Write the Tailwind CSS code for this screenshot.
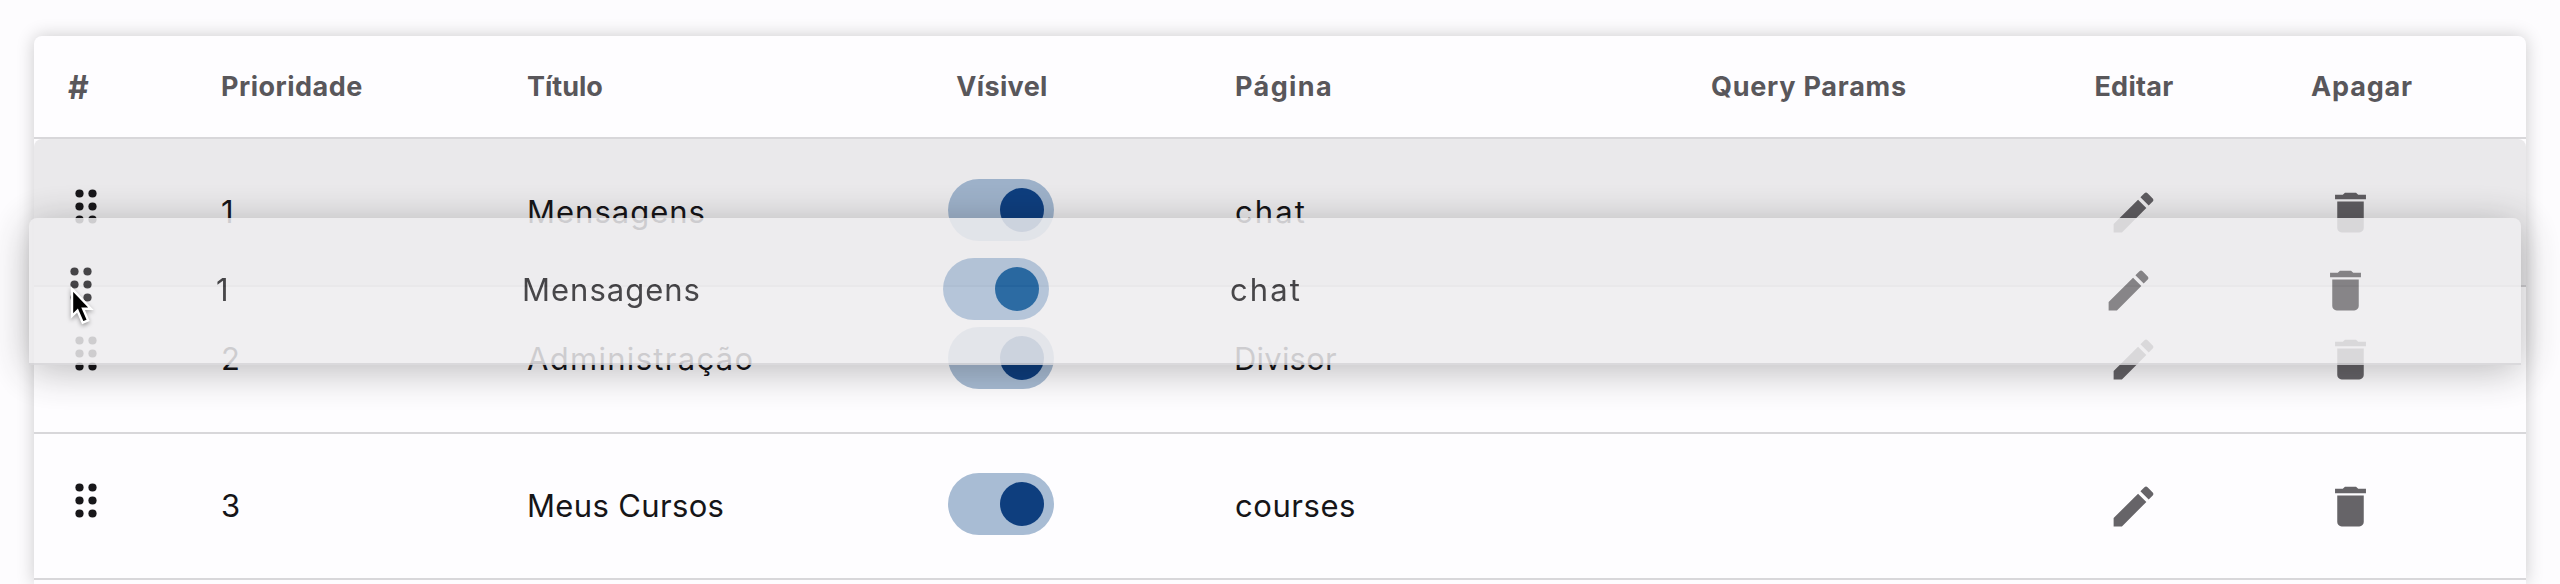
<!DOCTYPE html>
<html lang="pt">
<head>
<meta charset="utf-8">
<title>Menu</title>
<script src="https://cdn.jsdelivr.net/npm/@tailwindcss/browser@4"></script>
</head>
<body class="relative h-[584px] overflow-hidden bg-[#fdfcfe] font-['Inter',sans-serif]">
<svg class="hidden">
  <symbol id="drag" viewBox="0 0 22 35"><circle cx="4.5" cy="4.5" r="4.1"/><circle cx="17.5" cy="4.5" r="4.1"/><circle cx="4.5" cy="17.5" r="4.1"/><circle cx="17.5" cy="17.5" r="4.1"/><circle cx="4.5" cy="30.5" r="4.1"/><circle cx="17.5" cy="30.5" r="4.1"/></symbol>
  <symbol id="edit" viewBox="0 0 24 24"><path d="M3 17.25V21h3.75L17.81 9.94l-3.75-3.75L3 17.25zM20.71 7.04c.39-.39.39-1.02 0-1.41l-2.34-2.34c-.39-.39-1.02-.39-1.41 0l-1.83 1.83 3.75 3.75 1.83-1.83z"/></symbol>
  <symbol id="trash" viewBox="0 0 24 24"><path d="M6 19c0 1.1.9 2 2 2h8c1.1 0 2-.9 2-2V7H6v12zM19 4h-3.5l-1-1h-5l-1 1H5v2h14V4z"/></symbol>
</svg>

<main class="px-[34px] pt-9">
  <section class="h-[548px] rounded-t-lg bg-[#fefdff] shadow-[0_0_18px_rgba(0,0,0,0.2)]">
    <header class="grid h-[103px] grid-cols-[187px_306px_353px_244px_584px_326px_200px_292px] items-center whitespace-nowrap border-b-2 border-[#d8d7da] pt-0.5 text-[27px] font-bold text-[#59575b]">
      <div class="pl-[34px] text-[32px]">#</div>
      <div class="tracking-[0.5px]">Prioridade</div>
      <div>Título</div>
      <div class="text-center tracking-[0.35px]">Vísivel</div>
      <div class="pl-[111px] tracking-[1.4px]">Página</div>
      <div class="pl-[3px] tracking-[0.75px]">Query Params</div>
      <div class="text-center tracking-[0.3px]">Editar</div>
      <div class="pl-[77px] tracking-[0.85px]">Apagar</div>
    </header>

    <div class="grid h-[148px] grid-cols-[187px_306px_352px_244px_585px_326px_198px_292px] items-center whitespace-nowrap rounded-t-lg border-b-2 border-[#d0cfd2] bg-[#eae9eb] text-[31px] text-[#161518]">
      <div class="pb-3 pl-[41px]"><svg class="h-[35px] w-[22px] fill-[#18171a]"><use href="#drag"/></svg></div>
      <div>1</div>
      <div class="tracking-[1px]">Mensagens</div>
      <div class="flex justify-center pb-1"><div class="flex h-[62px] w-[106px] items-center justify-end rounded-full bg-[#9db1c9] pr-[10px]"><div class="size-11 rounded-full bg-[#0e3e7e]"></div></div></div>
      <div class="pl-[112px] tracking-[2.1px]">chat</div>
      <div></div>
      <div class="flex justify-center"><svg class="size-[53px] fill-[#5e5c60]"><use href="#edit"/></svg></div>
      <div class="pl-[92px]"><svg class="size-[53px] fill-[#5e5c60]"><use href="#trash"/></svg></div>
    </div>

    <div class="grid h-[147px] grid-cols-[187px_306px_352px_244px_585px_326px_198px_292px] items-center whitespace-nowrap border-b-2 border-[#d8d7da] text-[31px] text-[#161518]">
      <div class="pb-3 pl-[41px]"><svg class="h-[35px] w-[22px] fill-[#18171a]"><use href="#drag"/></svg></div>
      <div>2</div>
      <div class="tracking-[1.3px]">Administração</div>
      <div class="flex justify-center pb-1"><div class="flex h-[62px] w-[106px] items-center justify-end rounded-full bg-[#a8bcd4] pr-[10px]"><div class="size-11 rounded-full bg-[#0e3e7e]"></div></div></div>
      <div class="pl-[111px] tracking-[0.2px]">Divisor</div>
      <div></div>
      <div class="flex justify-center"><svg class="size-[53px] fill-[#666468]"><use href="#edit"/></svg></div>
      <div class="pl-[92px]"><svg class="size-[53px] fill-[#666468]"><use href="#trash"/></svg></div>
    </div>

    <div class="grid h-[146px] grid-cols-[187px_306px_352px_244px_585px_326px_198px_292px] items-center whitespace-nowrap border-b-2 border-[#d8d7da] text-[31px] text-[#161518]">
      <div class="pb-3 pl-[41px]"><svg class="h-[35px] w-[22px] fill-[#18171a]"><use href="#drag"/></svg></div>
      <div>3</div>
      <div class="tracking-[0.35px]">Meus Cursos</div>
      <div class="flex justify-center pb-1"><div class="flex h-[62px] w-[106px] items-center justify-end rounded-full bg-[#a8bcd4] pr-[10px]"><div class="size-11 rounded-full bg-[#0e3e7e]"></div></div></div>
      <div class="pl-[112px] tracking-[0.55px]">courses</div>
      <div></div>
      <div class="flex justify-center"><svg class="size-[53px] fill-[#666468]"><use href="#edit"/></svg></div>
      <div class="pl-[92px]"><svg class="size-[53px] fill-[#666468]"><use href="#trash"/></svg></div>
    </div>
  </section>
</main>

<!-- row being dragged -->
<div class="absolute left-[29px] top-[218px] grid h-[147px] w-[2492px] grid-cols-[187px_306px_352px_244px_585px_326px_198px_292px] items-center whitespace-nowrap rounded-t-lg border-b-2 border-[#d4d3d6] bg-[#eeedef] text-[31px] text-[#29282b] opacity-85 shadow-[0_6px_42px_rgba(0,0,0,0.32)]">
  <div class="pb-3 pl-[41px]"><svg class="h-[35px] w-[22px] fill-[#29282b]"><use href="#drag"/></svg></div>
  <div>1</div>
  <div class="tracking-[1px]">Mensagens</div>
  <div class="flex justify-center pb-1"><div class="flex h-[62px] w-[106px] items-center justify-end rounded-full bg-[#a9bcd3] pr-[10px]"><div class="size-11 rounded-full bg-[#085294]"></div></div></div>
  <div class="pl-[112px] tracking-[2.1px]">chat</div>
  <div></div>
  <div class="flex justify-center"><svg class="size-[53px] fill-[#737174]"><use href="#edit"/></svg></div>
  <div class="pl-[92px]"><svg class="size-[53px] fill-[#737174]"><use href="#trash"/></svg></div>
</div>

<!-- pointer -->
<svg class="absolute left-[68px] top-[284px] h-[44px] w-[30px] drop-shadow-[0_2px_2px_rgba(0,0,0,0.35)]" viewBox="0 0 30 44"><path d="M4 5v27l5.5-5.4 5.2 12 5.4-2.3-5-11.6h7.8z" fill="#000" stroke="#fff" stroke-width="2.4"/></svg>
</body>
</html>
